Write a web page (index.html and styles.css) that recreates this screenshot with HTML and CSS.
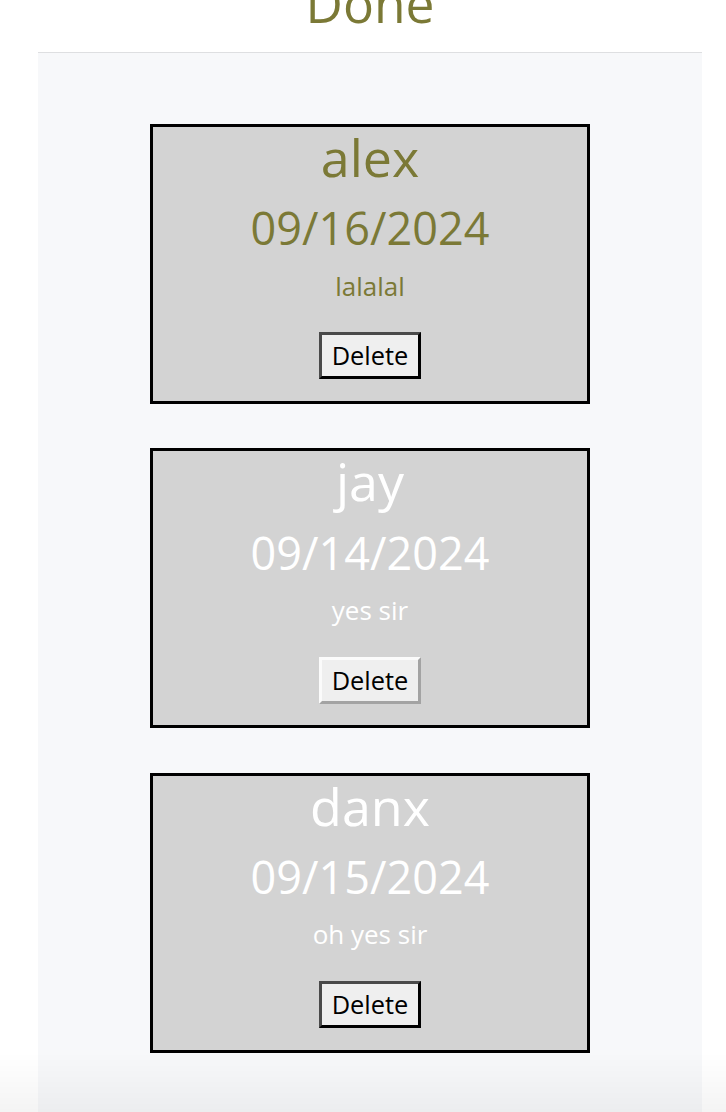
FILE: index.html
```html
<!DOCTYPE html>
<html lang="en">
<head>
<meta charset="utf-8">
<title>Done</title>
<link rel="stylesheet" href="styles.css">
</head>
<body>
<div class="page">
  <header class="header">
    <h1 class="title">Done</h1>
  </header>
  <main class="list">
    <section class="card card-olive">
      <h2 class="name">alex</h2>
      <p class="date">09/16/2024</p>
      <p class="desc">lalalal</p>
      <button class="btn btn-dark">Delete</button>
    </section>
    <section class="card card-white">
      <h2 class="name">jay</h2>
      <p class="date">09/14/2024</p>
      <p class="desc">yes sir</p>
      <button class="btn btn-light">Delete</button>
    </section>
    <section class="card card-white">
      <h2 class="name">danx</h2>
      <p class="date">09/15/2024</p>
      <p class="desc">oh yes sir</p>
      <button class="btn btn-dark">Delete</button>
    </section>
  </main>
</div>
<div class="fade"></div>
</body>
</html>
```

FILE: styles.css
```css
html, body {
  margin: 0;
  padding: 0;
  background: #ffffff;
  font-family: "Open Sans", "Noto Sans", sans-serif;
}

.page {
  width: 664px;
  margin: -27.5px 0 0 38px;
  min-height: 1160px;
  background: #f7f8fa;
  display: flex;
  flex-direction: column;
}

.header {
  background: #ffffff;
  border-bottom: 1px solid #dedfe1;
  padding-bottom: 19.5px;
}

.title {
  margin: 0;
  font-size: 51.5px;
  line-height: 60px;
  font-weight: 400;
  color: #7b7936;
  text-align: center;
}

.list {
  display: flex;
  flex-direction: column;
  align-items: center;
  gap: 44.3px;
  padding-top: 71px;
}

.card {
  box-sizing: border-box;
  width: 440px;
  height: 280px;
  background: #d3d3d3;
  border: 3px solid #000;
  display: flex;
  flex-direction: column;
  align-items: center;
  text-align: center;
}

.card-olive { color: #7b7936; }
.card-white { color: #ffffff; }

.name {
  margin: 0;
  font-size: 52px;
  line-height: 60px;
  font-weight: 400;
}

.date {
  margin: 10.4px 0 0;
  font-size: 45px;
  line-height: 62px;
}

.desc {
  margin: 8.5px 0 0;
  font-size: 26px;
  line-height: 36px;
}

.btn {
  margin-top: 28.5px;
  box-sizing: border-box;
  height: 47px;
  padding: 0 10px;
  font-family: "Open Sans", "Noto Sans", sans-serif;
  font-size: 25.4px;
  line-height: 35px;
  color: #000;
  background: #efefef;
  border: 3px solid;
  border-radius: 0;
}

.btn-dark {
  border-color: #4a4a4a #000 #000 #4a4a4a;
}

.btn-light {
  border-color: #fbfbfb #a3a3a3 #a3a3a3 #fbfbfb;
}

.fade {
  position: fixed;
  left: 0;
  right: 0;
  bottom: 0;
  height: 60px;
  background: linear-gradient(rgba(0,0,0,0), rgba(0,0,0,0.045));
  pointer-events: none;
}
```
